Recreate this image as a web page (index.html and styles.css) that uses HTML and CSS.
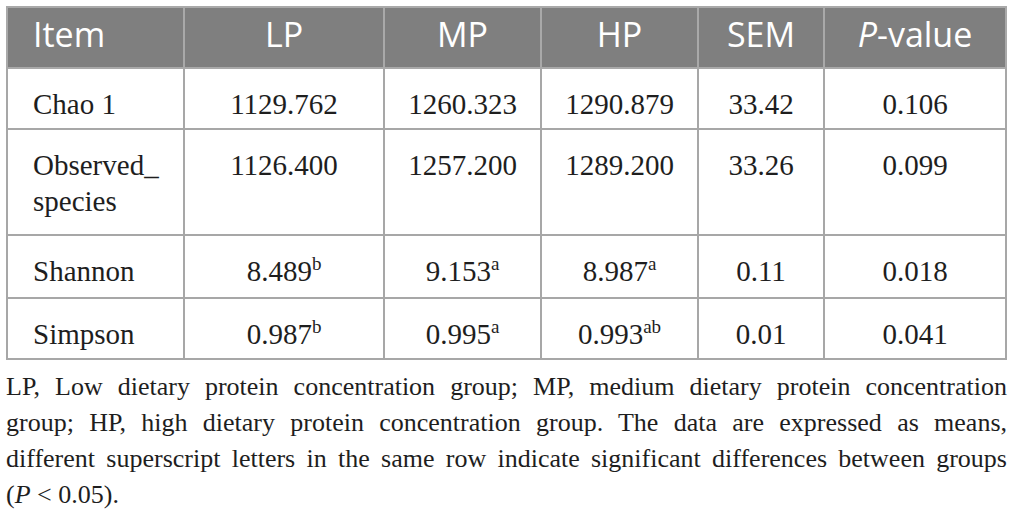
FILE: index.html
```html
<!DOCTYPE html>
<html>
<head>
<meta charset="utf-8">
<link rel="stylesheet" href="styles.css">
</head>
<body>
<div class="page">
  <table class="data">
    <colgroup>
      <col class="c-item"><col class="c-lp"><col class="c-mp"><col class="c-hp"><col class="c-sem"><col class="c-p">
    </colgroup>
    <thead>
      <tr class="r-head">
        <th class="first">Item</th><th>LP</th><th>MP</th><th>HP</th><th>SEM</th><th><i>P</i>-value</th>
      </tr>
    </thead>
    <tbody>
      <tr class="r-1">
        <td class="first">Chao 1</td><td>1129.762</td><td>1260.323</td><td>1290.879</td><td>33.42</td><td>0.106</td>
      </tr>
      <tr class="r-2">
        <td class="first">Observed_<br>species</td><td>1126.400</td><td>1257.200</td><td>1289.200</td><td>33.26</td><td>0.099</td>
      </tr>
      <tr class="r-3">
        <td class="first">Shannon</td><td>8.489<sup>b</sup></td><td>9.153<sup>a</sup></td><td>8.987<sup>a</sup></td><td>0.11</td><td>0.018</td>
      </tr>
      <tr class="r-4">
        <td class="first">Simpson</td><td>0.987<sup>b</sup></td><td>0.995<sup>a</sup></td><td>0.993<sup>ab</sup></td><td>0.01</td><td>0.041</td>
      </tr>
    </tbody>
  </table>
  <div class="note">
    <span class="line just">LP, Low dietary protein concentration group; MP, medium dietary protein concentration</span>
    <span class="line just">group; HP, high dietary protein concentration group. The data are expressed as means,</span>
    <span class="line just">different superscript letters in the same row indicate significant differences between groups</span>
    <span class="line">(<i>P</i> &lt; 0.05).</span>
  </div>
</div>
</body>
</html>
```

FILE: styles.css
```css
html, body {
  margin: 0;
  padding: 0;
  background: #ffffff;
}

.page {
  padding: 6px 7px 0 6px;
  width: 1001px;
}

.data {
  width: 1001px;
  table-layout: fixed;
  border-collapse: collapse;
  border: 2px solid #a7a7a7;
}

.c-item { width: 177px; }
.c-lp { width: 200px; }
.c-mp { width: 157px; }
.c-hp { width: 157px; }
.c-sem { width: 126px; }
.c-p { width: 182px; }

.data th,
.data td {
  border: 2px solid #a7a7a7;
  vertical-align: top;
  text-align: center;
  padding: 0 4px;
}

.data th {
  background: #7f7f7f;
  color: #ffffff;
  font-family: "Open Sans", "Noto Sans", sans-serif;
  font-weight: 400;
  font-size: 34px;
  line-height: 40px;
  padding-top: 6px;
  border-color: #a9a9a9;
}

.data td {
  font-family: "Liberation Serif", "Times New Roman", serif;
  font-size: 29px;
  line-height: 36px;
  color: #1e1e1e;
  padding-top: 17px;
}

.data .first {
  text-align: left;
  padding-left: 25px;
}

.r-head { height: 61px; }
.r-1 { height: 61px; }
.r-2 { height: 106px; }
.r-3 { height: 63px; }
.r-4 { height: 61px; }

.data sup {
  font-size: 19px;
  line-height: 0;
  vertical-align: 11px;
}

.note {
  margin-top: 9px;
  font-family: "Liberation Serif", "Times New Roman", serif;
  font-size: 26px;
  line-height: 36px;
  color: #1e1e1e;
}

.note .line {
  display: block;
  white-space: nowrap;
}

.note .just {
  text-align: justify;
  text-align-last: justify;
}
```
